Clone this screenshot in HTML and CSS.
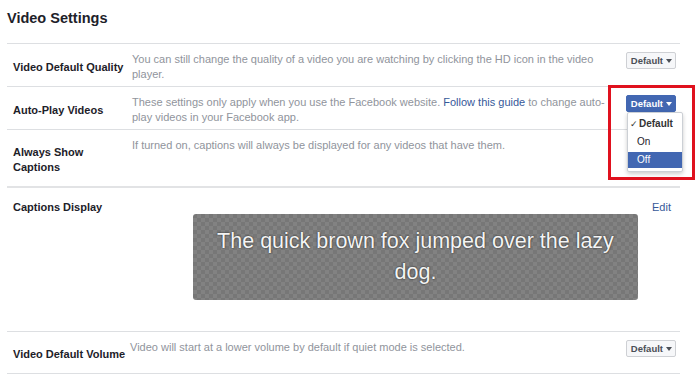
FILE: index.html
```html
<!DOCTYPE html>
<html lang="en">
<head>
    <meta charset="UTF-8">
    <meta name="viewport" content="width=device-width, initial-scale=1.0">
    <title>Video Settings</title>
    <link rel="stylesheet" href="styles.css">
</head>
<body>
    <div class="page">
        <h1 class="title">Video Settings</h1>

        <div class="row">
            <div class="label">Video Default Quality</div>
            <div class="desc">You can still change the quality of a video you are watching by clicking the HD icon in the video player.</div>
            <div class="control"><span class="btn">Default <i class="caret"></i></span></div>
        </div>

        <div class="row">
            <div class="label">Auto-Play Videos</div>
            <div class="desc">These settings only apply when you use the Facebook website. <a class="link">Follow this guide</a> to change auto-play videos in your Facebook app.</div>
            <div class="control"><span class="btn btn-blue">Default <i class="caret"></i></span></div>
        </div>

        <div class="row row-tall">
            <div class="label">Always Show<br>Captions</div>
            <div class="desc">If turned on, captions will always be displayed for any videos that have them.</div>
            <div class="control"></div>
        </div>

        <div class="captions">
            <div class="captions-head">
                <div class="label">Captions Display</div>
                <a class="link edit">Edit</a>
            </div>
            <div class="preview">The quick brown fox jumped over the lazy dog.</div>
        </div>

        <div class="row row-last">
            <div class="label">Video Default Volume</div>
            <div class="desc desc-narrow">Video will start at a lower volume by default if quiet mode is selected.</div>
            <div class="control"><span class="btn">Default <i class="caret"></i></span></div>
        </div>

        <!-- menu opened from the auto-play button -->
        <ul class="menu">
            <li class="menu-item checked"><span class="check">✓</span>Default</li>
            <li class="menu-item">On</li>
            <li class="menu-item active">Off</li>
        </ul>

        <!-- red highlight drawn over the screenshot -->
        <div class="highlight"></div>
    </div>
</body>
</html>
```

FILE: styles.css
```css
body {
    margin: 0;
    background: #fff;
    font-family: "Liberation Sans", Arial, sans-serif;
    color: #1d2129;
}
.page {
    position: relative;
    width: 673px;
    padding-left: 7px;
}
.title {
    margin: 0 0 16px;
    padding-top: 9px;
    font-size: 14.5px;
    line-height: 18px;
    font-weight: bold;
    color: #1d2129;
}
.row {
    display: grid;
    grid-template-columns: 119px 478px 1fr;
    min-height: 29px;
    padding: 8px 4px 4px 6px;
    border-top: 1px solid #dddfe2;
}
.row-last {
    border-bottom: 1px solid #dddfe2;
}
.label {
    align-self: center;
    font-size: 11px;
    line-height: 15px;
    font-weight: bold;
    color: #1d2129;
}
.row-tall .label {
    padding: 7px 0 7px;
}
.desc {
    align-self: start;
    font-size: 11px;
    line-height: 15px;
    color: #90949c;
}
.desc-narrow {
    margin-left: -2px;
}
.link {
    color: #365899;
    text-decoration: none;
}
.control {
    display: flex;
    justify-content: flex-end;
    align-items: flex-start;
}
.btn {
    display: inline-flex;
    align-items: center;
    gap: 3px;
    height: 15px;
    padding: 0 3px 0 4px;
    font-size: 9.5px;
    font-weight: bold;
    color: #4b4f56;
    background: #f6f7f9;
    border: 1px solid #ced0d4;
    border-radius: 2px;
}
.btn-blue {
    color: #fff;
    background: #4267b2;
    border-color: #4267b2;
}
.caret {
    width: 0;
    height: 0;
    border-left: 3px solid transparent;
    border-right: 3px solid transparent;
    border-top: 4px solid currentColor;
}
.captions {
    border-top: 2px solid #e2e3e5;
    padding: 12px 9px 31px 6px;
}
.captions-head {
    display: flex;
    justify-content: space-between;
}
.edit {
    font-size: 11px;
    line-height: 15px;
}
.preview {
    width: 405px;
    height: 86px;
    margin: -1px 0 0 180px;
    padding: 0 20px;
    display: flex;
    align-items: center;
    justify-content: center;
    text-align: center;
    font-size: 21.5px;
    line-height: 31px;
    color: #f4f4f4;
    text-shadow: 0 0 2px rgba(0,0,0,0.8);
    border-radius: 3px;
    background: repeating-conic-gradient(#828282 0 25%, #777 0 50%) 0 0 / 8px 8px;
}
.menu {
    position: absolute;
    left: 627px;
    top: 112px;
    width: 54px;
    margin: 0;
    padding: 3px 0;
    list-style: none;
    background: #fff;
    border: 1px solid #ccd0d5;
    border-radius: 2px;
    box-shadow: 0 2px 4px rgba(0,0,0,0.2);
}
.menu-item {
    height: 16px;
    line-height: 16px;
    margin-bottom: 2px;
    padding-left: 9px;
    font-size: 10px;
    color: #1d2129;
}
.menu-item.checked {
    padding-left: 2px;
    font-weight: bold;
    color: #333;
}
.check {
    display: inline-block;
    width: 9px;
    font-size: 9px;
    font-weight: normal;
}
.menu-item.active {
    margin: 0;
    color: #fff;
    background: #4267b2;
}
.highlight {
    position: absolute;
    left: 608px;
    top: 85px;
    width: 81px;
    height: 89px;
    border: 3px solid #e0111e;
}
```
